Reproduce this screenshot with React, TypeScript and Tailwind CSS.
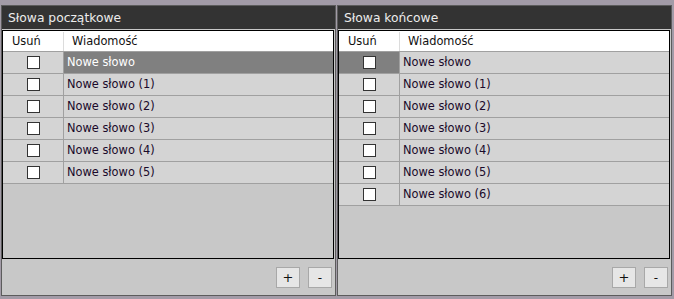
const FONT = { fontFamily: '"DejaVu Sans", Verdana, sans-serif' };

type PanelProps = {
  title: string;
  rows: string[];
  selectedCell: "check" | "text";
};

function Checkbox() {
  return <div className="h-[13px] w-[13px] border border-[#333] bg-white" />;
}

function Panel({ title, rows, selectedCell }: PanelProps) {
  return (
    <div className="flex h-[291px] w-[335px] flex-col border border-[#5c5c5c] bg-[#c8c8c8]">
      <div className="flex h-[23px] items-center bg-[#333333] px-[6px] pt-[1px] text-[12.3px] text-[#ececec]">
        {title}
      </div>
      <div className="mr-[1px] mt-[1px] flex h-[229px] flex-col border border-black bg-[#c8c8c8]">
        <div className="flex h-[21px] border-b border-[#a0a0a0] bg-white pt-[1px] text-[11.4px] text-[#111]">
          <div className="flex w-[61px] items-center border-r border-[#dcdcdc] pl-[9px]">Usuń</div>
          <div className="flex flex-1 items-center pl-[8px]">Wiadomość</div>
        </div>
        {rows.map((r, i) => {
          const sel = i === 0;
          return (
            <div key={r} className="flex h-[22px] border-b border-[#a0a0a0] bg-[#d4d4d4] text-[11.4px] text-[#1a0a2a]">
              <div
                className={
                  "flex w-[61px] items-center justify-center border-r border-[#a0a0a0] " +
                  (sel && selectedCell === "check" ? "bg-[#808080]" : "")
                }
              >
                <Checkbox />
              </div>
              <div
                className={
                  "flex flex-1 items-center pl-[3px] pt-[1px] " +
                  (sel && selectedCell === "text" ? "bg-[#808080] text-white" : "")
                }
              >
                {r}
              </div>
            </div>
          );
        })}
      </div>
      <div className="flex flex-1 items-center justify-end gap-[8px] pr-[3px] pt-[1px]">
        <button className="flex h-[21px] w-[24px] items-center justify-center border border-[#a8a8a8] bg-[#e6e6e6] text-[13px] text-[#111]">
          +
        </button>
        <button className="flex h-[21px] w-[24px] items-center justify-center border border-[#a8a8a8] bg-[#e6e6e6] text-[12px] text-[#111]">
          -
        </button>
      </div>
    </div>
  );
}

export default function App() {
  const left = ["Nowe słowo", "Nowe słowo (1)", "Nowe słowo (2)", "Nowe słowo (3)", "Nowe słowo (4)", "Nowe słowo (5)"];
  const right = [...left, "Nowe słowo (6)"];
  return (
    <div style={FONT} className="flex h-[299px] w-[674px] gap-[1px] bg-[#a29ba7] pl-[1px] pt-[5px]">
      <Panel title="Słowa początkowe" rows={left} selectedCell="text" />
      <Panel title="Słowa końcowe" rows={right} selectedCell="check" />
    </div>
  );
}
